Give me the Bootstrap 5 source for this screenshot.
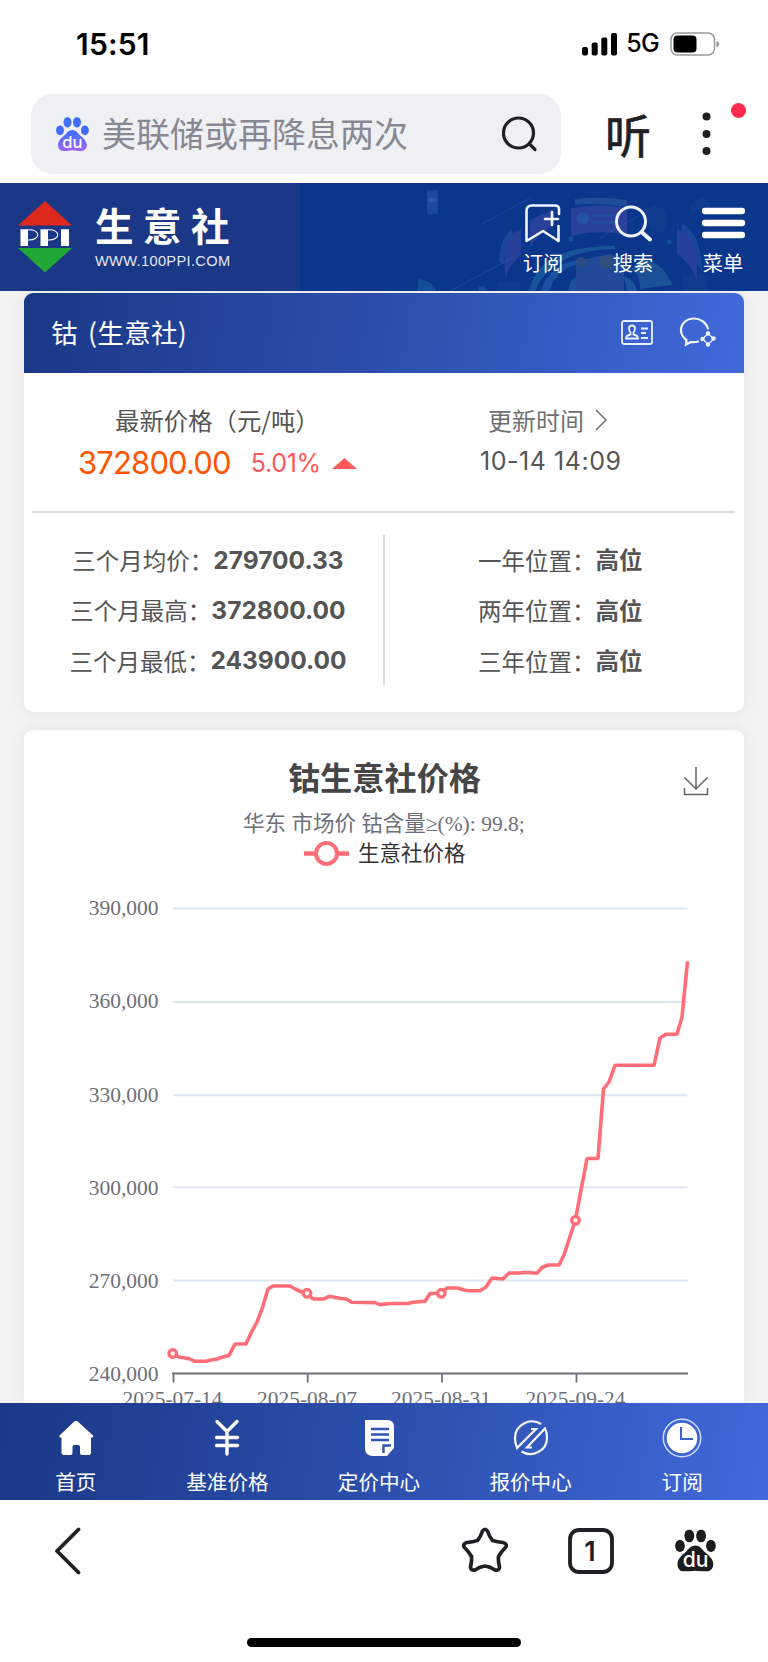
<!DOCTYPE html>
<html lang="zh-CN">
<head>
<meta charset="utf-8">
<meta name="viewport" content="width=device-width, initial-scale=1">
<title>钴 (生意社)</title>
<link href="https://cdn.jsdelivr.net/npm/bootstrap@5.3.0/dist/css/bootstrap.min.css" rel="stylesheet">
<script src="https://cdn.jsdelivr.net/npm/bootstrap@5.3.0/dist/js/bootstrap.bundle.min.js"></script>
<style>
body{width:768px;height:1662px;overflow:hidden;background:#f3f3f4;font-family:Inter,"Noto Sans CJK SC",sans-serif;color:#555;line-height:1}
svg{display:block;flex:none}
.cjk{font-family:"Noto Sans CJK SC",sans-serif}
.status{height:94px;padding:0 48px 7px 76px;color:#000}
.clock{font-size:30px;font-weight:600;letter-spacing:.2px}
.net{font-size:25px;font-weight:500;letter-spacing:-.7px}
.searchrow{height:89px;padding:0 22px 9px 31px}
.searchbox{width:530px;height:80px;border-radius:22px;background:#eff0f3;color:#888894;font-size:34px;padding:0 23px 0 25px}
.hint{margin-left:13px;padding-bottom:2px}
.listen{font-size:46px;font-weight:400;color:#1f2024;-webkit-text-stroke:.7px #1f2024;width:48px;margin-left:44px;padding-bottom:3px}
.brandbar{height:108px;background:#0a378b;color:#fff}
.brandleft{width:300px;background:#1a3886;padding-left:18px}
.brandtext{margin:0 0 0 23px}
.brandname{font-size:38.500px;font-weight:700;letter-spacing:9.500px;line-height:40px}
.brandurl{font:14.600px/18px "Liberation Sans",sans-serif;letter-spacing:.35px;color:#e4e8f5;margin-top:8px}
.art{inset:0 0 0 auto}
.hitem{width:90px;font-size:20.300px;padding-top:19px}
.panel{width:720px;margin:0 auto;background:#fff;border-radius:9px;box-shadow:0 0 16px rgba(0,0,0,.07)}
.grad{background:linear-gradient(100deg,#1a3886,#2b4eab 48%,#4169db)}
.panelhead{height:80px;border-radius:9px 9px 0 0;color:#fff;font-size:26.600px;padding:0 29px 2px 27px;word-spacing:4px;letter-spacing:.25px}
.t24{font-size:24.400px;line-height:36px}
.price{font-size:31px;color:#f50;line-height:36px;letter-spacing:-.85px}
.pct{font-size:25px;color:#ff5659;line-height:36px;letter-spacing:-.3px}
.time{font-size:25px;line-height:36px;letter-spacing:.55px}
.rule{height:2px;background:#dcdcde;margin:0 9px 0 8px}
.vrule{width:2px;height:150px;background:#dcdcde}
.stats{font-size:23.500px}
.stats>div{height:50.300px;line-height:50px}
.stats b{font-size:24.500px;font-weight:700;line-height:1}
.stats b.cjk{font-size:23.500px}
.chartcard{height:673px;margin-top:18px;border-radius:9px 9px 0 0}
.serif{font-family:"Liberation Serif","Noto Sans CJK SC",serif}
.tabs{height:97px;color:#fff;font-size:20.600px;padding-right:10px;position:relative}
.tab-cell{padding-top:13px}
.toolbar{height:162px}
.homebar{width:274px;height:9px;border-radius:5px;background:#000;margin:0 auto}
</style>
</head>
<body>
<svg width="0" height="0" class="position-absolute">
  <defs>
    <linearGradient id="pawBlue" gradientUnits="userSpaceOnUse" x1="0" y1="0" x2="0" y2="34"><stop offset=".45" stop-color="#416ffc"/><stop offset="1" stop-color="#a066fb"/></linearGradient>
    <symbol id="paw" viewBox="0 0 33 34">
      <ellipse cx="11.500" cy="5.200" rx="4" ry="5.200"/><ellipse cx="21" cy="5.200" rx="4" ry="5.200"/>
      <ellipse cx="4" cy="13.300" rx="3.900" ry="4.900"/><ellipse cx="28.900" cy="13.300" rx="3.900" ry="4.900"/>
      <path d="M16.400 13C20 13 21.500 16 24 18.300C27.500 21.500 30.800 24 30.800 28C30.800 32 28 34 24.500 34C21 34 19 33.200 16.400 33.200C13.500 33.200 11.500 34 8 34C4.500 34 2 32 2 28C2 24 5 21.500 8.600 18.300C11 16 12.500 13 16.400 13Z"/>
    </symbol>
  </defs>
</svg>

<div class="bg-white">
  <div class="status d-flex align-items-center justify-content-between">
    <div class="clock">15:51</div>
    <div class="d-flex align-items-center">
      <svg width="36" height="24" class="me-2"><rect x="0" y="15" width="6" height="8.500" rx="2"/><rect x="9.700" y="10.500" width="6" height="13" rx="2"/><rect x="19.300" y="5.500" width="6" height="18" rx="2"/><rect x="29" y="1" width="6" height="22.500" rx="2"/></svg>
      <span class="net">5G</span>
      <svg width="50" height="24" style="margin-left:11px" viewBox="0 0 50 24"><rect x="1" y="1" width="43.500" height="22" rx="6.500" fill="none" stroke="#9b9b9b" stroke-width="1.500"/><rect x="3.500" y="3.500" width="23" height="17" rx="4"/><path d="M46.500 9Q49 10 49 12T46.500 15.500Z" fill="#8b8b8b"/></svg>
    </div>
  </div>
  <div class="searchrow d-flex align-items-center">
    <div class="searchbox d-flex align-items-center">
      <svg width="33" height="34" viewBox="0 0 33 34" fill="url(#pawBlue)"><use href="#paw" width="33" height="34"/><text x="16.300" y="30.500" text-anchor="middle" font-family="Inter" font-size="16.500" font-weight="500" fill="#fff">du</text></svg>
      <span class="cjk hint flex-grow-1">美联储或再降息两次</span>
      <svg width="36" height="36" fill="none" stroke="#1f2024" stroke-width="3.200" stroke-linecap="round"><circle cx="16.500" cy="17" r="15"/><path d="M27.500 28L33 33.500"/></svg>
    </div>
    <div class="listen cjk">听</div>
    <svg width="50" height="80" class="ms-auto"><g fill="#1f2024"><circle cx="10.500" cy="22.500" r="4"/><circle cx="10.500" cy="40" r="4"/><circle cx="10.500" cy="57" r="4"/></g><circle cx="42.500" cy="16.500" r="7.500" fill="#ff2a4d"/></svg>
  </div>
</div>

<header class="brandbar d-flex position-relative justify-content-between">
  <svg class="art position-absolute" width="468" height="108" viewBox="300 183 468 108">
    <g fill="none" stroke="#3a62b4" stroke-width="1" opacity=".4"><path d="M450 291L512 258M482 224L532 197M600 238L640 215"/></g>
    <g opacity=".24">
      <rect x="427" y="190" width="11" height="24" fill="#4d7fd0"/><path d="M427 200L432.500 197L438 200L432.500 203Z" fill="#a9c6ff"/>
      <path d="M418 279Q434 281 436 291H418Z" fill="#2fa3c3"/>
      <path d="M571 208Q600 203 627 208V235Q600 229 571 236Z" fill="#8a62c8"/><path d="M575 199Q600 196 627 200V207Q600 202 575 205Z" fill="#6a8ec9"/><circle cx="583" cy="218" r="6" fill="#7fb0ee"/><path d="M592 214H616V217H592ZM592 221H616V224H592Z" fill="#7f90e0"/>
      <path d="M504 242Q508 234 521 229V255Q509 264 505 280Z" fill="#8060cc"/><path d="M499 262Q500 238 512 229V236Q504 243 504 264Z" fill="#4b7cca"/>
      <path d="M530 220L554 209V225Q540 232 530 247Z" fill="#8a5ed0"/>
      <path d="M677 228Q692 236 697 250V282Q691 263 677 254Z" fill="#8560c8"/><path d="M682 223Q701 234 702 270L697 264Q697 241 682 231Z" fill="#4b7cca"/>
      <path d="M529 291Q539 245 615 246V249Q552 250 535 291Z" fill="#3eb0c4"/>
      <path d="M541 291Q550 263 582 259V263Q557 268 549 291Z" fill="#46a6df"/>
      <path d="M642 258Q665 264 672 285L640 289Q640 272 630 270Z" fill="#4baab8"/>
      <path d="M568 291Q570 277 581 274V291ZM624 276Q636 281 637 291H627Z" fill="#55a6d2"/>
      <path d="M576 261L610 254L624 262V291H576Z" fill="#6f86c8"/><circle cx="581" cy="262" r="5" fill="#a08f68"/><circle cx="606" cy="262" r="7" fill="#a79b53"/>
      <g fill="#32a0b6"><circle cx="571" cy="239" r="2.500"/><circle cx="669" cy="242" r="2.500"/><circle cx="482" cy="290" r="4"/></g>
      <g fill="#486cae" opacity=".4"><path d="M690 205L702 197L711 203V213H690ZM642 211L654 205L666 211V229L654 235ZM497 283H520V291H497ZM683 275H707V291H683Z"/></g>
    </g>
  </svg>
  <div class="brandleft d-flex align-items-center">
    <svg width="54" height="72" viewBox="0 0 54 72"><path d="M27 0L54 24.500H0Z" fill="#dc281d"/><path d="M0 47H54L27 71.500Z" fill="#22a837"/><g fill="#fff"><path d="M2.500 28.300H10V45H2.500ZM22.500 28.300H30V45H22.500ZM43 28.300H51V45H43Z"/></g><path d="M10 28.800C23 28 23 39.500 10 39M30 28.800C43 28 43 39.500 30 39" fill="none" stroke="#fff" stroke-width="1.100"/></svg>
    <div class="brandtext"><div class="brandname cjk">生意社</div><div class="brandurl">WWW.100PPI.COM</div></div>
  </div>
  <nav class="d-flex position-relative cjk">
    <div class="hitem d-flex flex-column align-items-center">
      <svg width="40" height="42" viewBox="0 0 40 42" fill="none" stroke="#eef3ff" stroke-width="2.600" stroke-linecap="round" stroke-linejoin="round"><path d="M36 12V7Q36 3.500 32 3.500H9Q3.500 3.500 3.500 9V39L20 29L35.500 39V24M29 10V23M22 17H35"/></svg>
      <span class="mt-2">订阅</span></div>
    <div class="hitem d-flex flex-column align-items-center">
      <svg width="40" height="42" viewBox="0 0 40 42" fill="none" stroke="#eef3ff" stroke-width="3" stroke-linecap="round"><circle cx="18" cy="19.500" r="14.500"/><path d="M28.500 30L37 37.500" stroke-width="4"/></svg>
      <span class="mt-2">搜索</span></div>
    <div class="hitem d-flex flex-column align-items-center">
      <svg width="46" height="42" viewBox="0 0 46 42" stroke="#fff" stroke-width="6.300" stroke-linecap="round"><path d="M5 9H42M5 21H42M5 33H42"/></svg>
      <span class="mt-2">菜单</span></div>
  </nav>
</header>

<main class="cjk">
  <section class="panel" style="height:419px;margin-top:2px">
    <div class="panelhead grad d-flex align-items-center">
      <span class="flex-grow-1">钴 (生意社)</span>
      <svg width="32" height="25" viewBox="0 0 32 25" fill="none" stroke="#e9efff" stroke-width="1.800"><rect x="1" y="1" width="30" height="23" rx="2"/><path d="M5 18.500Q5 15.500 9.500 14.500V12.500Q7.500 10 8 7.500Q9 5.500 11 5.500T14 7.500Q14.500 10 12.500 12.500V14.500Q17 15.500 17 18.500ZM20 8.500H27M20 13H25M20 18H27"/></svg>
      <svg width="38" height="31" viewBox="0 0 38 31" fill="none" stroke="#f1f5ff" stroke-width="2.200" style="margin-left:26px;margin-right:-2px" stroke-linecap="round"><path d="M29 11.500C27 5 21 1.500 15 1.500C7 1.500 2 7 2 13C2 17 4 20.500 7.500 23L7 27.500L12 25Q16 25.500 19 24.500"/><path d="M29 16.500L23.500 22L29 27.500L35 22Z" stroke-width="1.200"/><g fill="#f1f5ff" stroke="none"><circle cx="29" cy="16.500" r="2.200"/><circle cx="23.500" cy="22" r="2.200"/><circle cx="29" cy="27.500" r="2.200"/><circle cx="34.500" cy="21.500" r="2.200"/></g></svg>
    </div>
    <div class="d-flex" style="height:138px;padding-top:29px">
      <div style="width:360px">
        <div class="t24" style="padding-left:91px">最新价格（元/吨）</div>
        <div class="d-flex align-items-center" style="padding:7px 0 0 54px;font-family:Inter">
          <span class="price">372800.00</span><span class="pct" style="margin-left:20px">5.01%</span>
          <svg width="25" height="11" style="margin-left:11px"><path d="M0 11L12.500 0L25 11Z" fill="#ff5659"/></svg>
        </div>
      </div>
      <div class="flex-grow-1">
        <div class="t24 d-flex align-items-center" style="padding-left:104px;color:#707070;font-size:24px">更新时间<svg width="14" height="22" style="margin-left:11px" fill="none" stroke="#777" stroke-width="1.600"><path d="M1 1L11 11L1 21"/></svg></div>
        <div class="time" style="padding:5px 0 0 96px;font-family:Inter">10-14 14:09</div>
      </div>
    </div>
    <div class="rule"></div>
    <div class="d-flex" style="padding-top:22px">
      <div class="stats d-flex flex-column align-items-center" style="width:359px;padding-left:9px">
        <div class="d-flex align-items-center">三个月均价：<b style="font-family:Inter">279700.33</b></div>
        <div class="d-flex align-items-center">三个月最高：<b style="font-family:Inter">372800.00</b></div>
        <div class="d-flex align-items-center">三个月最低：<b style="font-family:Inter">243900.00</b></div>
      </div>
      <div class="vrule"></div>
      <div class="stats" style="padding-left:93px">
        <div class="d-flex align-items-center">一年位置：<b class="cjk">高位</b></div>
        <div class="d-flex align-items-center">两年位置：<b class="cjk">高位</b></div>
        <div class="d-flex align-items-center">三年位置：<b class="cjk">高位</b></div>
      </div>
    </div>
  </section>

  <section class="panel chartcard">
    <svg width="720" height="673" viewBox="24 730 720 673">
      <text class="cjk" x="384.500" y="790" text-anchor="middle" font-size="32.200" font-weight="700" fill="#464646">钴生意社价格</text>
      <text class="serif" x="243" y="831" font-size="21.500" fill="#6e7079">华东 市场价 钴含量≥(%): 99.8;</text>
      <path d="M304 853.500H349" stroke="#ff6e76" stroke-width="4.300"/><circle cx="326.500" cy="853.500" r="10.500" fill="#fff" stroke="#ff6e76" stroke-width="4"/>
      <text class="cjk" x="358" y="861" font-size="21.500" fill="#333">生意社价格</text>
      <path d="M696 767V788M684.500 777.500L696 789L707.500 777.500M684.500 788V794.500H707.500V788" fill="none" stroke="#666" stroke-width="1.500"/>
      <path d="M173 908.500H687.500M173 1002H687.500M173 1095.300H687.500M173 1187.200H687.500M173 1280.500H687.500" stroke="#e0e6f1" stroke-width="2"/>
      <path d="M172 1373.500H688M173.500 1373V1382.500M307.700 1373V1382.500M442 1373V1382.500M576.500 1373V1382.500" fill="none" stroke="#6e7079" stroke-width="1.800"/>
      <g class="serif" font-size="21.500" fill="#6e7079" text-anchor="end">
        <text x="158.500" y="915">390,000</text><text x="158.500" y="1008">360,000</text><text x="158.500" y="1101.500">330,000</text><text x="158.500" y="1194.500">300,000</text><text x="158.500" y="1287.500">270,000</text><text x="158.500" y="1380.500">240,000</text>
      </g>
      <g class="serif" font-size="21.400" fill="#6e7079" text-anchor="middle">
        <text x="172.500" y="1405.500">2025-07-14</text><text x="307" y="1405.500">2025-08-07</text><text x="441" y="1405.500">2025-08-31</text><text x="575.500" y="1405.500">2025-09-24</text>
      </g>
      <polyline fill="none" stroke="#ff6e76" stroke-width="3.600" stroke-linejoin="bevel" points="173,1353.500 179,1357 189,1358.700 195,1361.300 206,1361.300 211,1360 217,1359 223,1357 229,1355.500 235,1344 246,1344 251,1333 257,1322 262,1309 268,1289 273,1286 290,1286 296,1289.500 302,1292 307,1293.300 313,1299 324,1299 329,1296.300 341,1298.500 346,1299 352,1302.300 375,1302.600 380,1304.600 391,1303.500 408,1303.500 413,1302.300 425,1301.300 430,1293.500 441,1293.300 447,1288 458,1288 464,1290 469,1290.700 480,1290.700 486,1287 492,1278 503,1279 509,1273 520,1273 525,1272.300 537,1273.300 542,1267.500 548,1265 559,1265 564,1255 575.300,1220.300 587,1158.500 598,1158.500 603.500,1089 609,1082 615,1065.300 654,1065.300 660,1038 666,1034.300 677,1034.300 682,1017 687.500,961.500"/>
      <g fill="#fff" stroke="#ff6e76" stroke-width="3.300"><circle cx="172.700" cy="1353.500" r="3.800"/><circle cx="307" cy="1293.300" r="3.800"/><circle cx="441.300" cy="1293.300" r="3.800"/><circle cx="575.500" cy="1220.300" r="3.800"/></g>
    </svg>
  </section>
</main>

<nav class="tabs grad cjk d-flex">
  <div class="tab-cell flex-fill w-100 d-flex flex-column align-items-center">
    <svg width="36" height="40" viewBox="0 0 36 40" fill="#fff"><path d="M16.500 5.300Q18 4 19.500 5.300L35 19.500Q36 21.500 33 21.500V36Q33 39 31 39H24Q22 39 22 37V31Q22 29 20 29H16.500Q14.500 29 14.500 31V37Q14.500 39 12.500 39H6Q3.500 39 3.500 36V21.500Q.500 21.500 1.500 19.500Z"/></svg>
    <span style="margin-top:15px">首页</span></div>
  <div class="tab-cell flex-fill w-100 d-flex flex-column align-items-center">
    <svg width="26" height="40" viewBox="0 0 26 40" fill="none" stroke="#fff" stroke-width="3.400" stroke-linecap="round"><path d="M3 5.500L13 15.500L23 5.500M2.500 21.500H23.500M2.500 29.500H23.500M13 15.500V38"/></svg>
    <span style="margin-top:15px">基准价格</span></div>
  <div class="tab-cell flex-fill w-100 d-flex flex-column align-items-center">
    <svg width="32" height="40" viewBox="0 0 32 40"><path d="M2 4H24Q31 4 31 11V32L24 40H10Q2 40 2 32Z" fill="#fff"/><path d="M8 13H26M8 18.500H26M8 24H26M20.500 37V29.500H28" fill="none" stroke="#3054b5" stroke-width="2.400"/></svg>
    <span style="margin-top:15px">定价中心</span></div>
  <div class="tab-cell flex-fill w-100 d-flex flex-column align-items-center">
    <svg width="36" height="40" viewBox="0 0 36 40" fill="none" stroke="#f4f7ff" stroke-width="2.200"><path d="M28 8C17 1 2 9 2 22C2 26 3 29 4 32L23 13H18M8.500 35.500C19 42 34 35 34 22C34 18 33.500 15.500 32 12.500L14 31.500H19"/></svg>
    <span style="margin-top:15px">报价中心</span></div>
  <div class="tab-cell flex-fill w-100 d-flex flex-column align-items-center">
    <svg width="40" height="42" viewBox="0 0 40 42" style="margin-bottom:-2px"><circle cx="20" cy="22" r="18.700" fill="none" stroke="#cfdcff" stroke-width="1.500"/><circle cx="20" cy="22" r="15.300" fill="#fff"/><path d="M19 11V23H31" fill="none" stroke="#3c62cf" stroke-width="2"/></svg>
    <span style="margin-top:15px">订阅</span></div>
</nav>

<footer class="toolbar bg-white">
  <div class="d-flex" style="height:138px;padding:27px 52px 0 54px">
    <svg width="28" height="48" fill="none" stroke="#1f2024" stroke-width="3.800" stroke-linecap="round" stroke-linejoin="round"><path d="M24.500 2.500L3 24L24.500 45.500"/></svg>
    <svg width="46" height="46" viewBox="0 0 46 46" class="ms-auto" style="margin-right:60px" fill="none" stroke="#1f2024" stroke-width="3.700" stroke-linejoin="round"><path d="M20.500 4Q23 .500 25.500 4Q27.500 10 30.500 13.500Q35 15 41 15.500Q46 17 43.500 20.500Q39 25 36.500 29.500Q36 34 37.500 40Q37 44 33 43Q28 39.500 23 39Q18 39.500 13 43Q9 44 8.500 40Q10 34 9.500 29.500Q7 25 2.500 20.500Q0 17 5 15.500Q11 15 15.500 13.500Q18.500 10 20.500 4Z"/></svg>
    <svg width="46" height="48" viewBox="0 0 46 48" style="margin-right:61px"><rect x="2" y="3" width="42" height="42" rx="9" fill="none" stroke="#1f2024" stroke-width="3.800"/><text x="22" y="34" text-anchor="middle" font-family="Inter" font-size="27" font-weight="600" fill="#1f2024">1</text></svg>
    <svg width="41" height="43" viewBox="0 0 33 34" style="margin-top:2px" fill="#1c1c1e"><use href="#paw" width="33" height="34"/><text x="16.500" y="30.500" text-anchor="middle" font-family="Inter" font-size="17" font-weight="500" fill="#fff">du</text></svg>
  </div>
  <div class="homebar"></div>
</footer>
</body>
</html>
